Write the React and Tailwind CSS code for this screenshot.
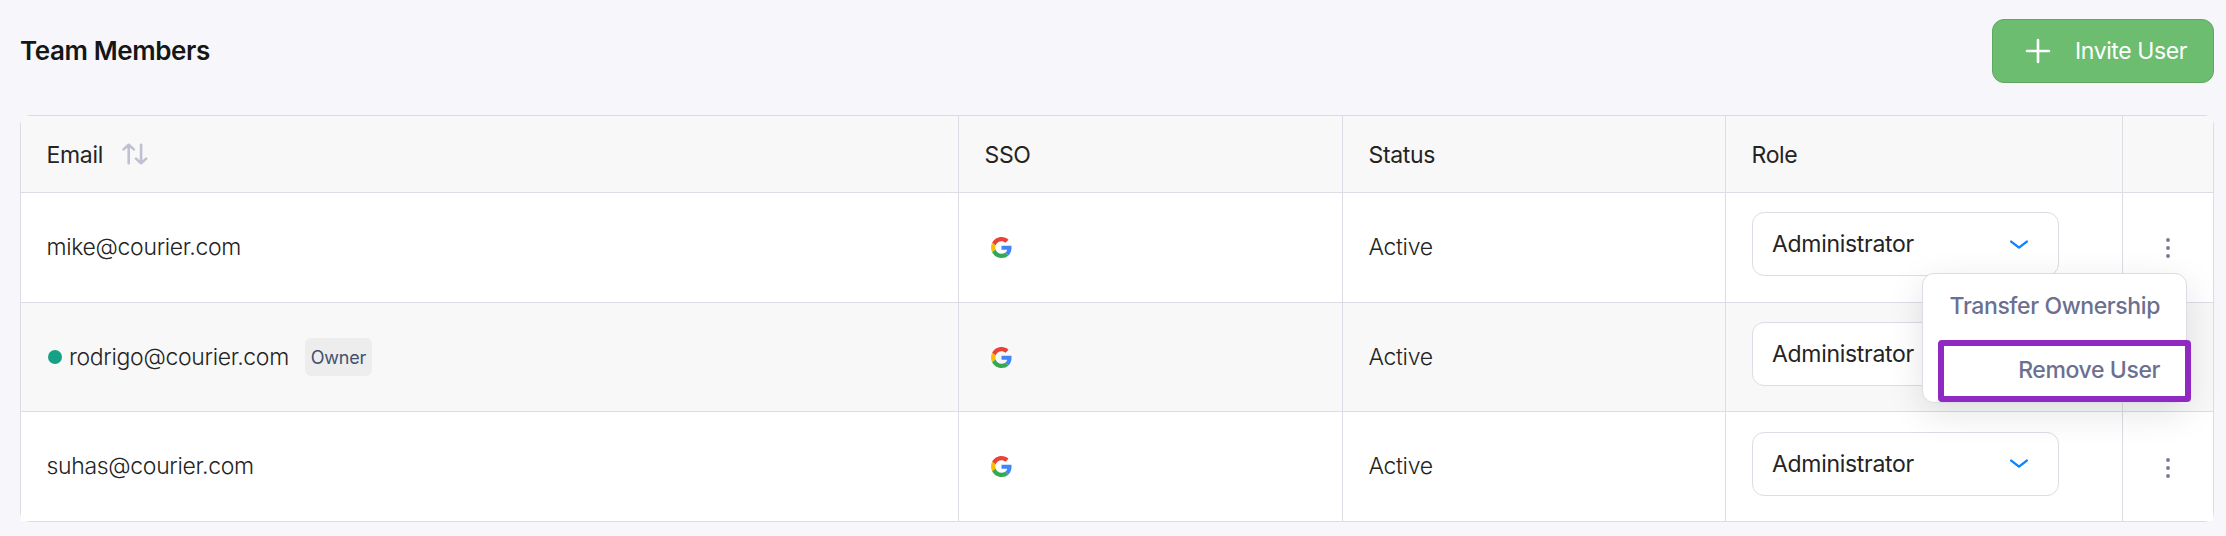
const members = [
  { email: 'mike@courier.com' },
  { email: 'rodrigo@courier.com', owner: true },
  { email: 'suhas@courier.com' },
];

const COLS = 'grid grid-cols-[938px_384px_383px_397px_90px]';

function GoogleLogo() {
  return (
    <svg viewBox="0 0 48 48" className="ml-[6px] h-[21px] w-[21px]">
      <path fill="#EA4335" d="M24 9.5c3.54 0 6.71 1.22 9.21 3.6l6.85-6.85C35.9 2.38 30.47 0 24 0 14.62 0 6.51 5.38 2.56 13.22l7.98 6.19C12.43 13.72 17.74 9.5 24 9.5z" />
      <path fill="#4285F4" d="M46.98 24.55c0-1.57-.15-3.09-.38-4.55H24v9.02h12.94c-.58 2.96-2.26 5.48-4.78 7.18l7.73 6c4.51-4.18 7.09-10.36 7.09-17.65z" />
      <path fill="#FBBC05" d="M10.53 28.59c-.48-1.45-.76-2.99-.76-4.59s.27-3.14.76-4.59l-7.98-6.19C.92 16.46 0 20.12 0 24c0 3.88.92 7.54 2.56 10.78l7.97-6.19z" />
      <path fill="#34A853" d="M24 48c6.48 0 11.93-2.13 15.89-5.81l-7.73-6c-2.15 1.45-4.92 2.3-8.16 2.3-6.26 0-11.57-4.22-13.47-9.91l-7.98 6.19C6.51 42.62 14.62 48 24 48z" />
    </svg>
  );
}

function SortIcon() {
  return (
    <svg viewBox="0 0 26 22" className="ml-[19px] h-[22px] w-[26px]" fill="none" stroke="#c0c0d2" strokeWidth="2.6" strokeLinecap="round" strokeLinejoin="round">
      <path d="M6.7 20.2V1.8M1.6 6.4l5.1-4.6 5.1 4.6M19.1 1.8v18.4M14 15.6l5.1 4.6 5.1-4.6" />
    </svg>
  );
}

function RoleSelect({ raised }) {
  return (
    <div className="flex h-16 w-[307px] items-center justify-between rounded-xl border border-[#dcdce4] bg-white pr-[29px] pl-[19px]">
      <span className="text-[23px] font-normal tracking-[-0.3px] text-[#242424]">Administrator</span>
      <svg viewBox="0 0 20 12" className={`h-3 w-5 ${raised ? '' : 'mt-0.5'}`} fill="none" stroke="#0a84ff" strokeWidth="2.4" strokeLinecap="round" strokeLinejoin="round">
        <path d="M2.2 2.6 10 8.6l7.8-6" />
      </svg>
    </div>
  );
}

function MoreIcon() {
  return (
    <svg viewBox="0 0 4 20" className="h-5 w-1" fill="#757894">
      <circle cx="2" cy="2" r="1.9" />
      <circle cx="2" cy="10" r="1.9" />
      <circle cx="2" cy="18" r="1.9" />
    </svg>
  );
}

function MemberRow({ member, index }) {
  const last = index === 2;
  const cell = 'flex items-center border-r border-[#dcdce4] pl-[25.5px]';
  return (
    <div className={`${COLS} ${index === 1 ? 'h-[109px] bg-[#f8f8f8]' : last ? 'h-[109px] bg-white' : 'h-[110px] bg-white'} ${last ? '' : 'border-b border-[#dcdce4]'}`}>
      <div className={cell}>
        {member.owner && <span className="mr-[7px] ml-[1.5px] h-3.5 w-3.5 rounded-full bg-[#16a085]" />}
        <span>{member.email}</span>
        {member.owner && (
          <span className="ml-4 flex h-[38px] w-[67px] items-center justify-center rounded-md bg-[#ededed] text-[18px] font-normal tracking-[-0.2px] text-[#42526e]">Owner</span>
        )}
      </div>
      <div className={cell}><GoogleLogo /></div>
      <div className={cell}>Active</div>
      <div className={`flex items-start border-r border-[#dcdce4] pl-[26px] ${last ? 'pt-5' : 'pt-[19px]'}`}><RoleSelect raised={last} /></div>
      <div className={`flex items-center justify-center ${last ? 'pt-0.5' : ''}`}><MoreIcon /></div>
    </div>
  );
}

function UserMenu() {
  return (
    <div className="absolute top-[273px] left-[1922px] flex h-[130px] w-[265px] flex-col items-end rounded-xl border border-[#dcdce4] bg-white pt-4 pr-[26px] text-[23px] font-[550] tracking-[-0.4px] text-[#6b7090] shadow-[0_10px_36px_rgba(0,0,0,0.11)]">
      <div className="flex h-8 items-center whitespace-nowrap">Transfer Ownership</div>
      <div className="mt-8 flex h-8 items-center whitespace-nowrap">Remove User</div>
      <div className="absolute top-[66px] left-[15px] h-[62px] w-[253px] rounded-[4px] border-[6px] border-[#9029c2]" />
    </div>
  );
}

export default function App() {
  return (
    <div className="relative h-[536px] w-[2226px] overflow-hidden bg-[#f6f6fb] pt-[19px] pl-5 font-['Inter',sans-serif] text-[#242424]">
      <header className="flex h-16 w-[2194px] items-center justify-between">
        <h1 className="pb-0.5 text-[26px] font-semibold tracking-[-0.4px] text-[#161616]">Team Members</h1>
        <button className="flex h-16 w-[222px] items-center rounded-xl border border-[#5fa862] bg-[#6cbd6f] pl-8 text-[23px] tracking-[-0.4px] text-white">
          <svg viewBox="0 0 26 26" className="mr-6 h-[26px] w-[26px]" fill="none" stroke="currentColor" strokeWidth="2.6" strokeLinecap="round">
            <path d="M13 2v22M2 13h22" />
          </svg>
          <span className="whitespace-nowrap">Invite User</span>
        </button>
      </header>
      <div className="mt-8 w-[2194px] rounded-[10px] border border-[#dcdce4] text-[23px] tracking-[-0.33px]">
        <div className={`${COLS} h-[77px] rounded-t-[3px] border-b border-[#dcdce4] bg-[#f8f8f8]`}>
          <div className="flex items-center border-r border-[#dcdce4] pl-[25.5px]"><span className="pt-0.5">Email</span><SortIcon /></div>
          <div className="flex items-center border-r border-[#dcdce4] pt-0.5 pl-[25.5px]">SSO</div>
          <div className="flex items-center border-r border-[#dcdce4] pt-0.5 pl-[25.5px]">Status</div>
          <div className="flex items-center border-r border-[#dcdce4] pt-0.5 pl-[25.5px]">Role</div>
          <div />
        </div>
        <div className="font-light">
          {members.map((m, i) => <MemberRow key={m.email} member={m} index={i} />)}
        </div>
      </div>
      <UserMenu />
    </div>
  );
}
